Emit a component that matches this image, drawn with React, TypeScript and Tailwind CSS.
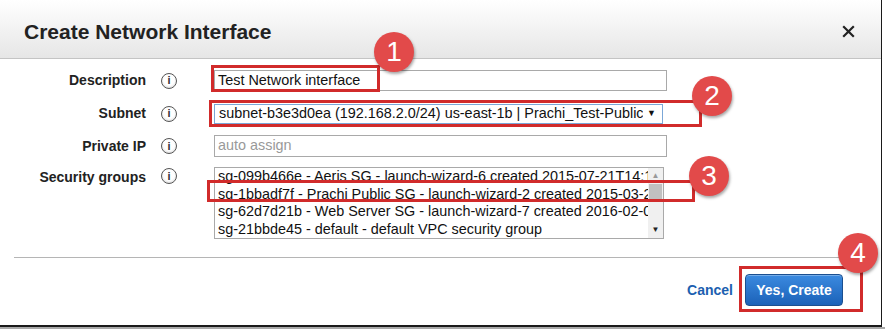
const InfoIcon = () => (
  <div className="w-4 h-4 rounded-full border border-[#555] flex items-center justify-center text-[11px] font-bold text-[#333] leading-none bg-white shadow-[inset_0_-1px_2px_rgba(0,0,0,0.15)]">
    i
  </div>
);

const Badge = ({ n, className }: { n: string; className: string }) => (
  <div
    className={`absolute w-[40px] h-[40px] rounded-full bg-[#e24a4a] text-white text-[28px] leading-none flex items-center justify-center shadow-[1px_2px_3px_rgba(0,0,0,0.35)] ${className}`}
  >
    {n}
  </div>
);

const Row = ({ label, children, top = false }: { label: string; children: React.ReactNode; top?: boolean }) => (
  <div className={`flex ${top ? 'items-start' : 'items-center'}`}>
    <div className={`w-[146px] text-right text-[14px] font-bold text-[#222] ${top ? 'pt-[0px]' : ''}`}>{label}</div>
    <div className={`w-[68px] pl-[15px] ${top ? 'pt-[1px]' : ''}`}>
      <InfoIcon />
    </div>
    {children}
  </div>
);

const groups = [
  'sg-099b466e - Aeris  SG - launch-wizard-6 created 2015-07-21T14:11',
  'sg-1bbadf7f - Prachi  Public SG - launch-wizard-2 created 2015-03-20',
  'sg-62d7d21b - Web Server SG - launch-wizard-7 created 2016-02-02',
  'sg-21bbde45 - default - default VPC security group',
];

export default function App() {
  return (
    <div className="w-[885px] h-[329px] bg-[#a8a8a8] font-['Liberation_Sans',Arial,sans-serif] relative overflow-hidden">
      <div className="w-[885px] h-[327px] bg-white">
        <div className="w-[882px] h-[327px] bg-white border-r border-b-2 border-[#1a1a1a] flex flex-col">
          {/* header */}
          <div className="h-[59px] shrink-0 flex items-center justify-between pl-[24px] pr-[26px] pt-[5px] bg-gradient-to-b from-white to-[#e6e6e6] border-b border-[#c4c4c4]">
            <h1 className="text-[21px] font-bold text-[#222]">Create Network Interface</h1>
            <svg width="13" height="13" viewBox="0 0 13 13">
              <path d="M1.2 1.2 L11.8 11.8 M11.8 1.2 L1.2 11.8" stroke="#222" strokeWidth="2.2" />
            </svg>
          </div>

          {/* body */}
          <div className="flex flex-col pt-[11px] gap-[11px] text-[14.4px]">
            <Row label="Description">
              <div className="w-[453px] h-[21px] border border-[#a9a9a9] flex items-center pl-[3px] text-[#111]">
                Test Network interface
              </div>
            </Row>
            <div className="mt-[1px]">
              <Row label="Subnet">
                <div className="w-[449px] h-[20px] border border-[#7ba7d7] flex items-center pl-[4px] pr-[6px] text-[#111]">
                  <span className="flex-1 overflow-hidden whitespace-nowrap">
                    subnet-b3e3d0ea (192.168.2.0/24) us-east-1b | Prachi_Test-Public
                  </span>
                  <span className="text-[9px] ml-[4px]">▼</span>
                </div>
              </Row>
            </div>
            <Row label="Private IP">
              <div className="w-[453px] h-[22px] border border-[#a9a9a9] flex items-center pl-[3px] text-[#999]">
                auto assign
              </div>
            </Row>
            <div className="-mt-[1px]">
              <Row label="Security groups" top>
                <div className="w-[450px] h-[72px] border border-[#a9a9a9] flex">
                  <div className="flex-1 overflow-hidden pl-[3px] pt-[0px] text-[#111] leading-[17.5px]">
                    {groups.map((g) => (
                      <div key={g} className="whitespace-nowrap">{g}</div>
                    ))}
                  </div>
                  <div className="w-[15px] bg-[#f0f0f0] flex flex-col items-center">
                    <span className="text-[8px] text-[#999] h-[16px] leading-[16px]">▲</span>
                    <div className="w-[13px] h-[15px] bg-[#c1c1c1]" />
                    <div className="flex-1" />
                    <span className="text-[8px] text-[#222] h-[16px] leading-[16px]">▼</span>
                  </div>
                </div>
              </Row>
            </div>
          </div>

          {/* footer */}
          <div className="mt-[18px] mx-[14px] border-t border-[#b5b5b5]" />
          <div className="flex items-center justify-end gap-[12px] pr-[38px] pt-[16px]">
            <span className="text-[14px] font-bold text-[#1c5fb0]">Cancel</span>
            <button className="w-[98px] h-[32px] rounded-[4px] border border-[#1b4f8f] bg-gradient-to-b from-[#3b8ae0] to-[#1b62b8] text-white text-[14px] font-bold shadow-[inset_0_1px_0_rgba(255,255,255,0.3)]">
              Yes, Create
            </button>
          </div>
        </div>
      </div>

      {/* annotations */}
      <div className="absolute left-[211px] top-[65px] w-[169px] h-[27px] border-[3px] border-[#d12b2b]" />
      <div className="absolute left-[209px] top-[100px] w-[493px] h-[27px] border-[3px] border-[#d12b2b]" />
      <div className="absolute left-[207px] top-[180px] w-[488px] h-[22px] border-[3px] border-[#d12b2b]" />
      <div className="absolute left-[739px] top-[266px] w-[124px] h-[46px] border-[3px] border-[#d12b2b]" />
      <Badge n="1" className="left-[374px] top-[32px]" />
      <Badge n="2" className="left-[692px] top-[76px]" />
      <Badge n="3" className="left-[689px] top-[156px]" />
      <Badge n="4" className="left-[838px] top-[233px]" />
    </div>
  );
}
